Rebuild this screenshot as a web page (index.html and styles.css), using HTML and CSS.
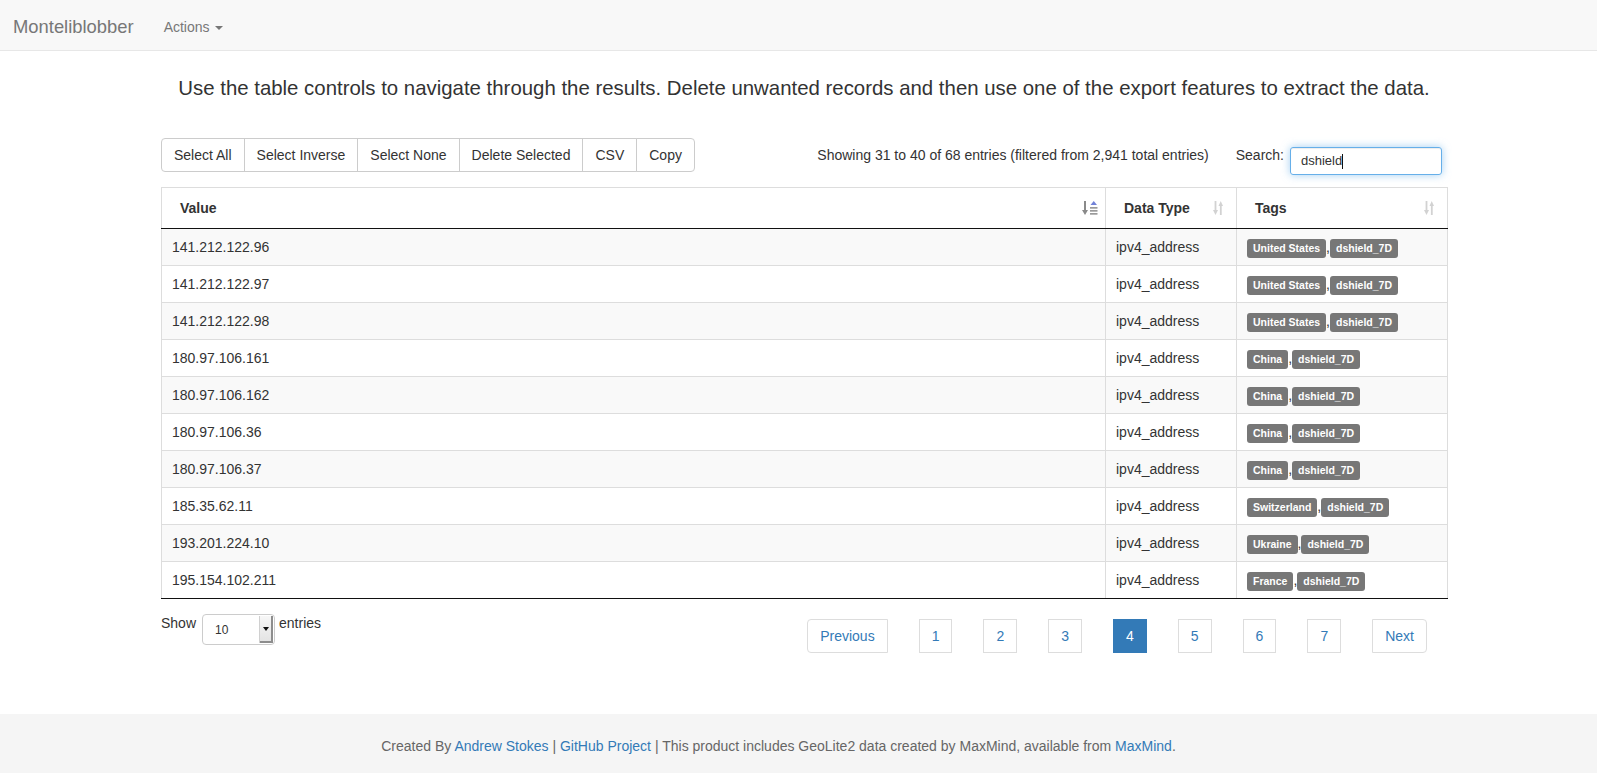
FILE: index.html
```html
<!DOCTYPE html>
<html lang="en">
<head>
<meta charset="utf-8">
<title>Monteliblobber</title>
<link rel="stylesheet" href="styles.css">
</head>
<body>
<nav class="navbar">
  <span class="brand">Monteliblobber</span>
  <span class="nav-link">Actions <span class="caret"></span></span>
</nav>

<main class="main">
  <p class="lead">Use the table controls to navigate through the results. Delete unwanted records and then use one of the export features to extract the data.</p>

  <div class="toolbar">
    <div class="btn-group">
      <span class="btn">Select All</span>
      <span class="btn">Select Inverse</span>
      <span class="btn">Select None</span>
      <span class="btn">Delete Selected</span>
      <span class="btn">CSV</span>
      <span class="btn">Copy</span>
    </div>
    <div class="info">Showing 31 to 40 of 68 entries (filtered from 2,941 total entries)</div>
    <div class="search-label">Search:</div>
    <div class="search-input"><span>dshield</span><span class="cursor"></span></div>
  </div>

  <table class="data-table">
    <colgroup>
      <col class="col-value">
      <col class="col-type">
      <col class="col-tags">
    </colgroup>
    <thead>
      <tr>
        <th><div class="th-inner"><span>Value</span>
          <svg class="sort-icon" width="16" height="16" viewBox="0 0 16 16">
            <rect x="2" y="1" width="2" height="10" fill="#8a8a8a"/>
            <polygon points="0,10 6,10 3,15" fill="#8a8a8a"/>
            <polygon points="8.5,5 15,5 11.75,1" fill="#7282d8"/>
            <rect x="8" y="7" width="7.5" height="1.7" fill="#9a9a9a"/>
            <rect x="8" y="10" width="7.5" height="1.7" fill="#9a9a9a"/>
            <rect x="8" y="13" width="7.5" height="1.7" fill="#9a9a9a"/>
          </svg></div></th>
        <th><div class="th-inner"><span>Data Type</span>
          <svg class="sort-icon" width="16" height="16" viewBox="0 0 16 16">
            <rect x="1.6" y="1" width="1.8" height="10" fill="#d2d2d2"/>
            <polygon points="0,10 5,10 2.5,15" fill="#d2d2d2"/>
            <polygon points="5.5,6 10,6 7.75,1" fill="#d2d2d2"/>
            <rect x="6.9" y="5.5" width="1.8" height="9.5" fill="#d2d2d2"/>
          </svg></div></th>
        <th><div class="th-inner"><span>Tags</span>
          <svg class="sort-icon" width="16" height="16" viewBox="0 0 16 16">
            <rect x="1.6" y="1" width="1.8" height="10" fill="#d2d2d2"/>
            <polygon points="0,10 5,10 2.5,15" fill="#d2d2d2"/>
            <polygon points="5.5,6 10,6 7.75,1" fill="#d2d2d2"/>
            <rect x="6.9" y="5.5" width="1.8" height="9.5" fill="#d2d2d2"/>
          </svg></div></th>
      </tr>
    </thead>
    <tbody>
      <tr><td>141.212.122.96</td><td>ipv4_address</td><td><span class="label">United States</span>,<span class="label">dshield_7D</span></td></tr>
      <tr><td>141.212.122.97</td><td>ipv4_address</td><td><span class="label">United States</span>,<span class="label">dshield_7D</span></td></tr>
      <tr><td>141.212.122.98</td><td>ipv4_address</td><td><span class="label">United States</span>,<span class="label">dshield_7D</span></td></tr>
      <tr><td>180.97.106.161</td><td>ipv4_address</td><td><span class="label">China</span>,<span class="label">dshield_7D</span></td></tr>
      <tr><td>180.97.106.162</td><td>ipv4_address</td><td><span class="label">China</span>,<span class="label">dshield_7D</span></td></tr>
      <tr><td>180.97.106.36</td><td>ipv4_address</td><td><span class="label">China</span>,<span class="label">dshield_7D</span></td></tr>
      <tr><td>180.97.106.37</td><td>ipv4_address</td><td><span class="label">China</span>,<span class="label">dshield_7D</span></td></tr>
      <tr><td>185.35.62.11</td><td>ipv4_address</td><td><span class="label">Switzerland</span>,<span class="label">dshield_7D</span></td></tr>
      <tr><td>193.201.224.10</td><td>ipv4_address</td><td><span class="label">Ukraine</span>,<span class="label">dshield_7D</span></td></tr>
      <tr><td>195.154.102.211</td><td>ipv4_address</td><td><span class="label">France</span>,<span class="label">dshield_7D</span></td></tr>
    </tbody>
  </table>

  <div class="bottom-row">
    <div class="length">
      <span>Show</span>
      <div class="select"><span class="select-value">10</span><span class="select-arrow"><span class="select-tri"></span></span></div>
      <span>entries</span>
    </div>
    <ul class="pagination">
      <li><a class="page prev">Previous</a></li>
      <li><a class="page">1</a></li>
      <li><a class="page">2</a></li>
      <li><a class="page">3</a></li>
      <li><a class="page active">4</a></li>
      <li><a class="page">5</a></li>
      <li><a class="page">6</a></li>
      <li><a class="page">7</a></li>
      <li><a class="page next">Next</a></li>
    </ul>
  </div>
</main>

<footer class="footer">
  <p class="footer-text">Created By <a>Andrew Stokes</a> | <a>GitHub Project</a> | This product includes GeoLite2 data created by MaxMind, available from <a>MaxMind</a>.</p>
</footer>
</body>
</html>
```

FILE: styles.css
```css
* { box-sizing: border-box; }

body {
  margin: 0;
  font-family: "Liberation Sans", Helvetica, Arial, sans-serif;
  font-size: 14px;
  line-height: 20px;
  color: #333;
  background: #fff;
}

a { color: #337ab7; text-decoration: none; }

.navbar {
  height: 51px;
  padding-top: 3px;
  background: #f8f8f8;
  border-bottom: 1px solid #e7e7e7;
  display: flex;
  align-items: center;
}

.brand {
  padding: 0 15px 0 13px;
  font-size: 18.4px;
  line-height: 20px;
  color: #777;
}

.nav-link {
  padding: 0 15px;
  color: #777;
  font-size: 14px;
}

.caret {
  display: inline-block;
  width: 0;
  height: 0;
  margin-left: 2px;
  vertical-align: middle;
  border-top: 4px solid #777;
  border-left: 4px solid transparent;
  border-right: 4px solid transparent;
}

.main {
  width: 1286px;
  margin-left: 161px;
  padding-top: 23px;
}

.lead {
  margin: 0 -40px;
  font-size: 20.4px;
  line-height: 29px;
  text-align: center;
  white-space: nowrap;
  color: #333;
}

.toolbar {
  display: flex;
  align-items: flex-start;
  height: 34px;
  margin-top: 35px;
  padding-right: 5px;
}

.btn-group { display: flex; }

.btn {
  padding: 6px 12px;
  border: 1px solid #ccc;
  background: #fff;
  color: #333;
  font-size: 14px;
  line-height: 20px;
  margin-left: -1px;
  white-space: nowrap;
}

.btn:first-child { margin-left: 0; border-radius: 4px 0 0 4px; }
.btn:last-child { border-radius: 0 4px 4px 0; }

.info {
  margin-left: auto;
  padding-top: 7px;
}

.search-label {
  margin-left: 27px;
  padding-top: 7px;
}

.search-input {
  margin-left: 6px;
  margin-top: 9px;
  width: 152px;
  height: 28px;
  border: 1px solid #66afe9;
  border-radius: 3px;
  box-shadow: inset 0 1px 1px rgba(0,0,0,.075), 0 0 8px rgba(102,175,233,.6);
  padding: 0 10px;
  font-size: 13px;
  line-height: 26px;
  display: flex;
  align-items: center;
  color: #333;
}

.cursor {
  display: inline-block;
  width: 1px;
  height: 15px;
  background: #111;
}

.data-table {
  width: 1286px;
  margin-top: 15px;
  border-collapse: collapse;
  table-layout: fixed;
  border: 1px solid #ddd;
}

.col-value { width: 944px; }
.col-type { width: 131px; }
.col-tags { width: 211px; }

.data-table th {
  padding: 10px 7px 10px 18px;
  text-align: left;
  font-weight: bold;
  line-height: 20px;
  border: 1px solid #ddd;
  border-bottom: 1px solid #111;
}

.th-inner {
  display: flex;
  justify-content: space-between;
  align-items: center;
}

.sort-icon { display: block; flex: none; }

.data-table td {
  padding: 8px 10px;
  line-height: 20px;
  border: 1px solid #ddd;
  white-space: nowrap;
}

.data-table tbody tr:nth-child(odd) td { background: #f9f9f9; }
.data-table tbody tr:last-child td { border-bottom: 1px solid #111; }

.label {
  display: inline;
  padding: 3px 6px 4px;
  font-size: 10.5px;
  font-weight: bold;
  line-height: 1;
  color: #fff;
  background: #777;
  border-radius: 3px;
  white-space: nowrap;
}

.bottom-row {
  display: flex;
  justify-content: space-between;
  align-items: flex-start;
  margin-top: 14px;
}

.length {
  display: flex;
  align-items: flex-start;
}

.select {
  display: flex;
  align-items: center;
  width: 73px;
  height: 31px;
  margin: 1px 4px 0 6px;
  border: 1px solid #ccc;
  border-radius: 4px;
  background: #fff;
  padding-left: 12px;
  padding-right: 1px;
}

.select-value { font-size: 12px; }

.select-arrow {
  margin-left: auto;
  width: 14px;
  height: 27px;
  background: linear-gradient(#f7f7f7, #e2e2e2);
  border-left: 1px solid #d0d0d0;
  box-shadow: inset -2px -2px 0 #8d8d8d;
  display: flex;
  align-items: center;
  justify-content: center;
}

.select-tri {
  width: 0;
  height: 0;
  margin: 0 2px 2px 0;
  border-top: 4px solid #111;
  border-left: 3px solid transparent;
  border-right: 3px solid transparent;
}

.pagination {
  display: flex;
  gap: 31px;
  list-style: none;
  margin: 6px 20px 0 0;
  padding: 0;
}

.page {
  display: block;
  padding: 6px 12px;
  border: 1px solid #ddd;
  color: #337ab7;
  background: #fff;
  line-height: 20px;
}

.page.prev { border-radius: 4px 0 0 4px; }
.page.next { border-radius: 0 4px 4px 0; }

.page.active {
  background: #337ab7;
  border-color: #337ab7;
  color: #fff;
}

.footer {
  margin-top: 61px;
  background: #f5f5f5;
  padding: 22px 40px 40px 0;
}

.footer-text {
  margin: 0;
  text-align: center;
  color: #666;
}
```
